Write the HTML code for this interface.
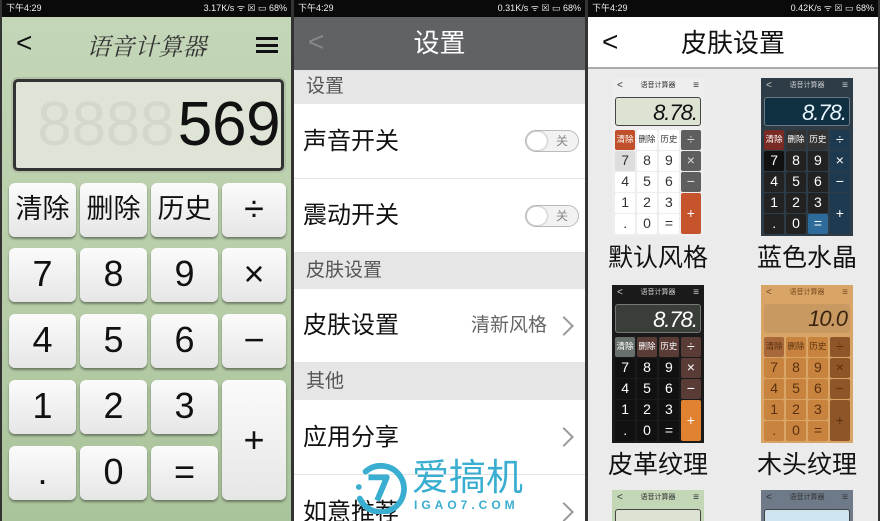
<!DOCTYPE html>
<html><head><meta charset="utf-8"><style>
*{margin:0;padding:0;box-sizing:border-box}
html,body{width:880px;height:521px;overflow:hidden}
body{background:#333;font-family:"Liberation Sans","Noto Sans CJK SC",sans-serif;position:relative}
.sb{position:absolute;top:0;height:17px;background:#0a0a0a;color:#eee;font-size:9px;line-height:17px}
.sb .l{position:absolute;left:4px}.sb .r{position:absolute;right:4px}
.p{position:absolute;top:17px;height:504px;overflow:hidden}
#L{left:2px;width:289px;background:linear-gradient(#c4d6b8,#b5cca6 60%,#a9c39a)}
#M{left:294px;width:291px;background:#fff}
#R{left:588px;width:290px;background:#ebebeb}
.btn{position:absolute;background:linear-gradient(#fbfbfb,#e6e6e6);border-radius:6px;box-shadow:0 2px 2px #6b7a63;text-align:center;color:#111;font-size:36px;line-height:52px}
.cn{font-size:27px}
.sec{position:absolute;left:0;width:291px;background:#e6e6e6;color:#555;font-size:19px;padding-left:12px}
.it{position:absolute;left:0;width:291px;font-size:24px;color:#111;padding-left:9px;border-bottom:1px solid #e2e2e2}
.chev{position:absolute;right:14px;width:14px;height:14px;border-right:2px solid #999;border-top:2px solid #999;transform:rotate(45deg)}
.tg{position:absolute;right:6px;width:54px;height:22px;border:1px solid #bbb;border-radius:11px;background:#f2f2f2;font-size:12px;color:#888;line-height:20px;padding-left:30px}
.tg:before{content:"";position:absolute;left:1px;top:1px;width:20px;height:18px;border-radius:9px;background:#fff;box-shadow:0 0 2px #888}
.mc{position:absolute;width:92px;height:158px;overflow:hidden}
.mc .t{height:16px;font-size:7px;line-height:16px;text-align:center;position:relative}
.mc .t:before{content:"<";position:absolute;left:5px;font-size:10px}
.mc .t:after{content:"≡";position:absolute;right:5px;font-size:10px}
.mc .d{position:absolute;left:3px;top:19px;width:86px;height:29px;border-radius:3px;text-align:right;font-size:22px;font-style:italic;line-height:29px;padding-right:3px;letter-spacing:-1px}
.mc .g{position:absolute;left:3px;top:52px;width:86px;display:grid;grid-template-columns:repeat(4,1fr);grid-template-rows:repeat(5,19.5px);gap:1.5px}
.mc .g b{font-weight:normal;border-radius:2px;text-align:center;font-size:14px;line-height:19px}
.mc .g b.s{font-size:8.5px}
.mc .g b.pl{grid-row:4/6;grid-column:4;line-height:40px}
.lab{position:absolute;font-size:25px;color:#111;width:140px;text-align:center}
.lcd{position:absolute;top:80px;font-size:62px;line-height:62px;font-family:'Liberation Mono',monospace;letter-spacing:-3px;transform:scaleY(1.05)}
</style></head><body>
<div class="sb" style="left:2px;width:289px"><span class="l">下午4:29</span><span class="r">3.17K/s ᯤ ☒ ▭ 68%</span></div>
<div class="sb" style="left:294px;width:291px"><span class="l">下午4:29</span><span class="r">0.31K/s ᯤ ☒ ▭ 68%</span></div>
<div class="sb" style="left:588px;width:290px"><span class="l">下午4:29</span><span class="r">0.42K/s ᯤ ☒ ▭ 68%</span></div>

<div class="p" id="L">
 <div style="position:absolute;left:14px;top:10px;font-size:28px;color:#111">&lt;</div>
 <div style="position:absolute;left:0;width:289px;top:10px;text-align:center;font-size:24px;font-family:'Liberation Serif','Noto Serif CJK SC',serif;font-style:italic;color:#333">语音计算器</div>
 <div style="position:absolute;left:254px;top:20px;width:22px;height:16px;border-top:3px solid #111;border-bottom:3px solid #111"><div style="margin-top:3.5px;height:3px;background:#111"></div></div>
 <div style="position:absolute;left:11px;top:62px;width:271px;height:92px;border:3px solid #333;border-radius:5px;background:#dfe5d6;box-shadow:0 0 0 2px #b0c0a6;overflow:hidden">
  <div class="lcd" style="top:15px;left:20px;color:#d3d9ca">88888</div>
  <div class="lcd" style="top:15px;right:2px;color:#111;background:#dfe5d6;padding-left:4px">569</div>
 </div>
 <div class="btn cn" style="left:7px;top:166px;width:67px;height:54px">清除</div>
 <div class="btn cn" style="left:78px;top:166px;width:67px;height:54px">删除</div>
 <div class="btn cn" style="left:149px;top:166px;width:67px;height:54px">历史</div>
 <div class="btn" style="left:220px;top:166px;width:64px;height:54px">÷</div>
 <div class="btn" style="left:7px;top:231px;width:67px;height:54px">7</div>
 <div class="btn" style="left:78px;top:231px;width:67px;height:54px">8</div>
 <div class="btn" style="left:149px;top:231px;width:67px;height:54px">9</div>
 <div class="btn" style="left:220px;top:231px;width:64px;height:54px">×</div>
 <div class="btn" style="left:7px;top:297px;width:67px;height:54px">4</div>
 <div class="btn" style="left:78px;top:297px;width:67px;height:54px">5</div>
 <div class="btn" style="left:149px;top:297px;width:67px;height:54px">6</div>
 <div class="btn" style="left:220px;top:297px;width:64px;height:54px">−</div>
 <div class="btn" style="left:7px;top:363px;width:67px;height:54px">1</div>
 <div class="btn" style="left:78px;top:363px;width:67px;height:54px">2</div>
 <div class="btn" style="left:149px;top:363px;width:67px;height:54px">3</div>
 <div class="btn" style="left:220px;top:363px;width:64px;height:120px;line-height:120px">+</div>
 <div class="btn" style="left:7px;top:429px;width:67px;height:54px">.</div>
 <div class="btn" style="left:78px;top:429px;width:67px;height:54px">0</div>
 <div class="btn" style="left:149px;top:429px;width:67px;height:54px">=</div>
</div>

<div class="p" id="M">
 <div style="position:absolute;left:0;top:0;width:291px;height:53px;background:#606266;color:#fff;font-size:26px;text-align:center;line-height:53px">设置</div>
 <div style="position:absolute;left:14px;top:9px;font-size:28px;color:#888">&lt;</div>
 <div class="sec" style="top:53px;height:34px;line-height:34px">设置</div>
 <div class="it" style="top:87px;height:75px;line-height:75px">声音开关<div class="tg" style="top:26px">关</div></div>
 <div class="it" style="top:162px;height:74px;line-height:74px">震动开关<div class="tg" style="top:26px">关</div></div>
 <div class="sec" style="top:236px;height:36px;line-height:36px">皮肤设置</div>
 <div class="it" style="top:272px;height:74px;line-height:74px">皮肤设置<span style="position:absolute;right:38px;font-size:19px;color:#666">清新风格</span><div class="chev" style="top:30px"></div></div>
 <div class="sec" style="top:346px;height:37px;line-height:37px">其他</div>
 <div class="it" style="top:383px;height:75px;line-height:75px">应用分享<div class="chev" style="top:30px"></div></div>
 <div class="it" style="top:458px;height:46px;line-height:75px;border:none">如意推荐<div class="chev" style="top:30px"></div></div>
</div>

<div class="p" id="R">
 <div style="position:absolute;left:0;top:0;width:290px;height:52px;background:#fff;border-bottom:2px solid #aaa;color:#111;font-size:26px;text-align:center;line-height:52px">皮肤设置</div>
 <div style="position:absolute;left:14px;top:9px;font-size:28px;color:#111">&lt;</div>

 <div class="mc" style="left:24px;top:61px;background:#eee;color:#333">
  <div class="t">语音计算器</div>
  <div class="d" style="background:#dde3d3;border:1px solid #444;color:#111">8.78.</div>
  <div class="g"><b class="s" style="background:#c0502c;color:#fff">清除</b><b class="s" style="background:#fff">删除</b><b class="s" style="background:#fff">历史</b><b style="background:#5e5e5e;color:#ddd">÷</b>
  <b style="background:#ddd">7</b><b style="background:#fff">8</b><b style="background:#fff">9</b><b style="background:#5e5e5e;color:#ddd">×</b>
  <b style="background:#fff">4</b><b style="background:#fff">5</b><b style="background:#fff">6</b><b style="background:#5e5e5e;color:#ddd">−</b>
  <b style="background:#fff">1</b><b style="background:#fff">2</b><b style="background:#fff">3</b><b class="pl" style="background:#c5532c;color:#fff">+</b>
  <b style="background:#fff">.</b><b style="background:#fff">0</b><b style="background:#fff">=</b></div>
 </div>
 <div class="mc" style="left:173px;top:61px;background:#2d3c46;color:#ccc">
  <div class="t">语音计算器</div>
  <div class="d" style="background:#0e3040;border:1px solid #6a7a84;color:#e8f6ff">8.78.</div>
  <div class="g" style="color:#fff"><b class="s" style="background:#7a2a24">清除</b><b class="s" style="background:#333">删除</b><b class="s" style="background:#333">历史</b><b style="background:#1e3a50">÷</b>
  <b style="background:#111">7</b><b style="background:#222">8</b><b style="background:#222">9</b><b style="background:#1e3a50">×</b>
  <b style="background:#222">4</b><b style="background:#222">5</b><b style="background:#222">6</b><b style="background:#1e3a50">−</b>
  <b style="background:#222">1</b><b style="background:#222">2</b><b style="background:#222">3</b><b class="pl" style="background:#1e3a50">+</b>
  <b style="background:#222">.</b><b style="background:#222">0</b><b style="background:#2d6c9a">=</b></div>
 </div>
 <div class="lab" style="left:0;top:221px">默认风格</div>
 <div class="lab" style="left:149px;top:221px">蓝色水晶</div>

 <div class="mc" style="left:24px;top:268px;background:#1a1a1a;color:#ccc">
  <div class="t">语音计算器</div>
  <div class="d" style="background:#3a3e38;border:1px solid #777;color:#fff">8.78.</div>
  <div class="g" style="color:#fff"><b class="s" style="background:#67706a">清除</b><b class="s" style="background:#5a3c36">删除</b><b class="s" style="background:#5a3c36">历史</b><b style="background:#5a3c36">÷</b>
  <b style="background:#111">7</b><b style="background:#111">8</b><b style="background:#111">9</b><b style="background:#5a3c36">×</b>
  <b style="background:#111">4</b><b style="background:#111">5</b><b style="background:#111">6</b><b style="background:#5a3c36">−</b>
  <b style="background:#111">1</b><b style="background:#111">2</b><b style="background:#111">3</b><b class="pl" style="background:#e0822f">+</b>
  <b style="background:#111">.</b><b style="background:#111">0</b><b style="background:#111">=</b></div>
 </div>
 <div class="mc" style="left:173px;top:268px;background:#d9a566;color:#7a4a20">
  <div class="t">语音计算器</div>
  <div class="d" style="background:#c89a62;color:#3a2410">10.0</div>
  <div class="g" style="color:#5a3010"><b class="s" style="background:#a8683a">清除</b><b class="s" style="background:#c8843e">删除</b><b class="s" style="background:#c8843e">历史</b><b style="background:#8e5628">÷</b>
  <b style="background:#c8843e">7</b><b style="background:#c8843e">8</b><b style="background:#c8843e">9</b><b style="background:#8e5628">×</b>
  <b style="background:#c8843e">4</b><b style="background:#c8843e">5</b><b style="background:#c8843e">6</b><b style="background:#8e5628">−</b>
  <b style="background:#c8843e">1</b><b style="background:#c8843e">2</b><b style="background:#c8843e">3</b><b class="pl" style="background:#8e5628">+</b>
  <b style="background:#c8843e">.</b><b style="background:#c8843e">0</b><b style="background:#c8843e">=</b></div>
 </div>
 <div class="lab" style="left:0;top:428px">皮革纹理</div>
 <div class="lab" style="left:149px;top:428px">木头纹理</div>

 <div class="mc" style="left:24px;top:473px;height:31px;background:#c3d6b6;color:#333"><div class="t">语音计算器</div><div class="d" style="background:#dde3d3;border:1px solid #444"></div></div>
 <div class="mc" style="left:173px;top:473px;height:31px;background:#6e7a88;color:#333"><div class="t">语音计算器</div><div class="d" style="background:#cfe6f0;border:1px solid #444"></div></div>
</div>

<svg style="position:absolute;left:352px;top:460px" width="58" height="54" viewBox="0 0 60 56">
 <path d="M14 12 A24 24 0 1 1 8 40" fill="none" stroke="#3aaed0" stroke-width="6" stroke-linecap="round"/>
 <circle cx="7" cy="28" r="3" fill="#3aaed0"/>
 <path d="M17 18 H36 L26 42" fill="none" stroke="#3aaed0" stroke-width="6" stroke-linejoin="round"/>
</svg>
<div style="position:absolute;left:412px;top:458px;font-size:37px;color:#3aaed0;line-height:40px">爱搞机</div>
<div style="position:absolute;left:414px;top:498px;font-size:12px;color:#3aaed0;letter-spacing:4px;font-weight:bold">IGAO7.COM</div>
</body></html>
